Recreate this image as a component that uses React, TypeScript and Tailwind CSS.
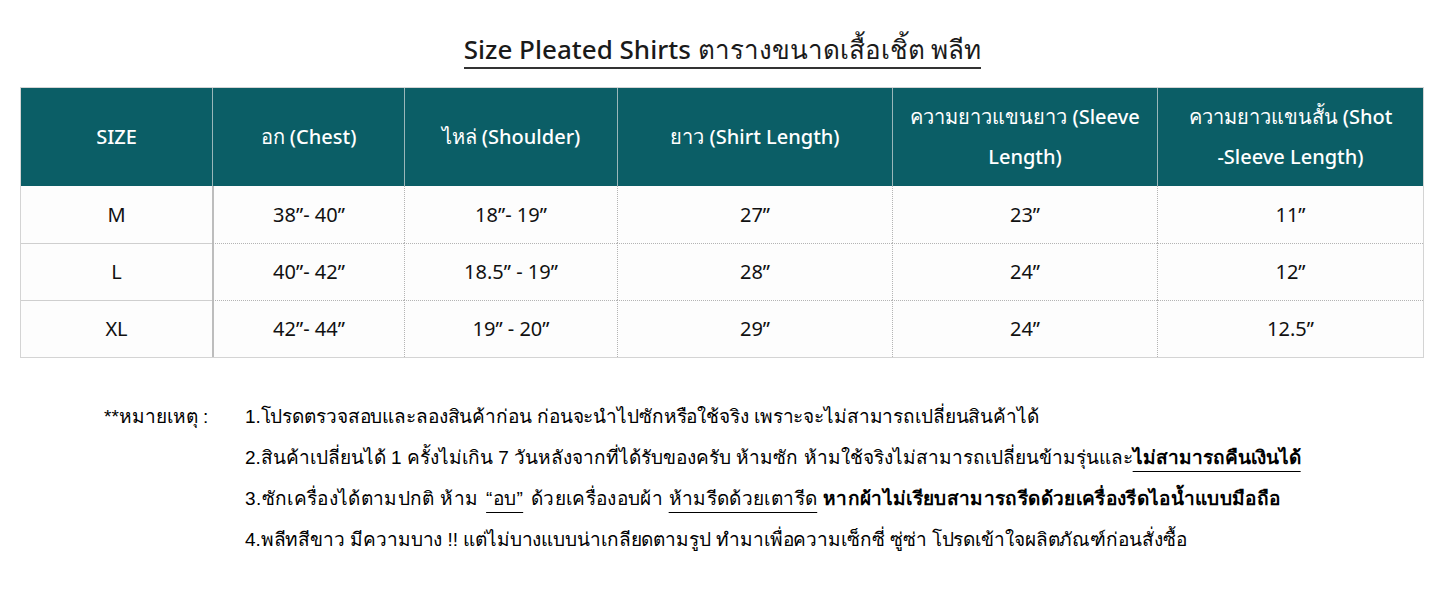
const rows = [
  ["M", "38”- 40”", "18”- 19”", "27”", "23”", "11”"],
  ["L", "40”- 42”", "18.5” - 19”", "28”", "24”", "12”"],
  ["XL", "42”- 44”", "19” - 20”", "29”", "24”", "12.5”"],
];

const widths = ["w-[191px]", "w-[192px]", "w-[213px]", "w-[275px]", "w-[265px]", "flex-1"];

function cellBorders(row: number, col: number) {
  const top =
    row === 0
      ? ""
      : col === 0
        ? "border-t border-t-[#cfcfcf]"
        : "border-t border-t-[#b4b4b4] [border-top-style:dotted]";
  const left =
    col === 1
      ? "border-l-2 border-l-[#bdbdbd]"
      : col > 1
        ? "border-l border-l-[#b4b4b4] [border-left-style:dotted]"
        : "";
  return `${top} ${left}`;
}

export default function App() {
  return (
    <div className="w-[1445px] h-[598px] bg-white text-[#111] font-['Noto_Sans',sans-serif]">
      {/* title */}
      <div className="pt-[31px] flex justify-center">
        <h1 className="text-[26px] font-medium leading-[36px] text-[#1a1a1a] border-b-2 border-[#333]">
          Size Pleated Shirts ตารางขนาดเสื้อเชิ้ต พลีท
        </h1>
      </div>

      {/* size table */}
      <div className="ml-[20px] mr-[21px] mt-[18px] border border-[#d4d4d4]">
        <div className="flex h-[98px] bg-[#0b5e66] text-white text-[20px] font-medium leading-[40px]">
          <div className={`${widths[0]} flex items-center justify-center`}>SIZE</div>
          <div className={`${widths[1]} flex items-center justify-center border-l border-[#9ab7b9]`}>อก (Chest)</div>
          <div className={`${widths[2]} flex items-center justify-center border-l border-[#9ab7b9]`}>ไหล่ (Shoulder)</div>
          <div className={`${widths[3]} flex items-center justify-center border-l border-[#9ab7b9]`}>ยาว (Shirt Length)</div>
          <div className={`${widths[4]} flex items-center justify-center text-center border-l border-[#9ab7b9]`}>
            ความยาวแขนยาว (Sleeve
            <br />
            Length)
          </div>
          <div className={`${widths[5]} flex items-center justify-center text-center border-l border-[#9ab7b9]`}>
            ความยาวแขนสั้น (Shot
            <br />
            -Sleeve Length)
          </div>
        </div>
        {rows.map((r, i) => (
          <div key={r[0]} className="flex h-[57px] text-[20px] bg-[#fdfdfd]">
            {r.map((c, j) => (
              <div key={j} className={`${widths[j]} flex items-center justify-center ${cellBorders(i, j)}`}>
                {c}
              </div>
            ))}
          </div>
        ))}
      </div>

      {/* notes */}
      <div className="mt-[38px] pl-[104px] flex text-[19px] leading-[41px] font-['Liberation_Sans',sans-serif] text-black">
        <div className="w-[141px]">**หมายเหตุ :</div>
        <div>
          <p className="tracking-[-0.12px]">1.โปรดตรวจสอบและลองสินค้าก่อน ก่อนจะนำไปซักหรือใช้จริง เพราะจะไม่สามารถเปลี่ยนสินค้าได้</p>
          <p>
            2.สินค้าเปลี่ยนได้ 1 ครั้งไม่เกิน 7 วันหลังจากที่ได้รับของครับ ห้ามซัก ห้ามใช้จริงไม่สามารถเปลี่ยนข้ามรุ่นและ
            <span className="font-bold underline underline-offset-[7px]">ไม่สามารถคืนเงินได้</span>
          </p>
          <p className="tracking-[0.35px]">
            3.ซักเครื่องได้ตามปกติ ห้าม <span className="underline underline-offset-[7px] px-[2px]">“อบ”</span> ด้วยเครื่องอบผ้า{" "}
            <span className="underline underline-offset-[7px]">ห้ามรีดด้วยเตารีด</span>{" "}
            <span className="font-bold">หากผ้าไม่เรียบสามารถรีดด้วยเครื่องรีดไอน้ำแบบมือถือ</span>
          </p>
          <p className="tracking-[-0.1px]">4.พลีทสีขาว มีความบาง !! แต่ไม่บางแบบน่าเกลียดตามรูป ทำมาเพื่อความเซ็กซี่ ซู่ซ่า โปรดเข้าใจผลิตภัณฑ์ก่อนสั่งซื้อ</p>
        </div>
      </div>
    </div>
  );
}
